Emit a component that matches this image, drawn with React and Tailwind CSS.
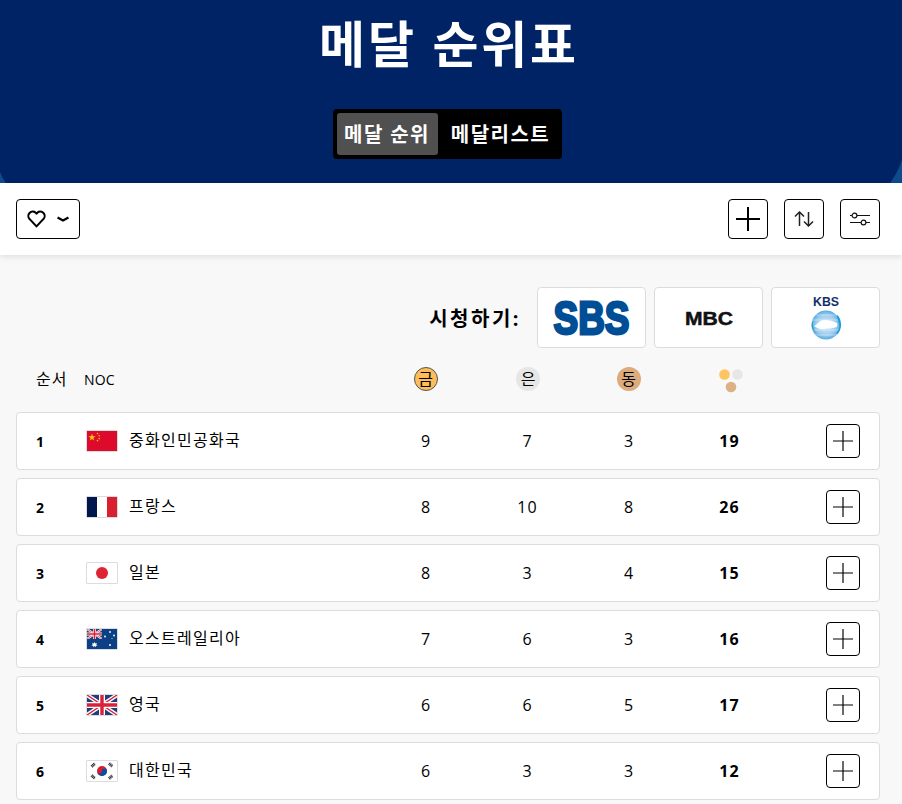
import React from "react";

const CJK = "font-['Open_Sans','Noto_Sans_CJK_KR',sans-serif]";

function Frame({ children }) {
  return (
    <span className="block w-8 h-[22px] shrink-0 border border-[#dcdcdc] rounded-[1px] overflow-hidden bg-white">
      <svg viewBox="0 0 30 20" width="30" height="20" preserveAspectRatio="none" className="block">{children}</svg>
    </span>
  );
}
const China = () => (
  <Frame>
    <rect width="30" height="20" fill="#de0a2b" />
    <polygon points="5,2.500 5.900,5.200 8.600,5.200 6.400,6.900 7.200,9.500 5,7.900 2.800,9.500 3.600,6.900 1.400,5.200 4.100,5.200" fill="#f5c518" />
    <circle cx="10.500" cy="2.500" r=".8" fill="#f5c518" /><circle cx="12.200" cy="4.800" r=".8" fill="#f5c518" />
    <circle cx="12.200" cy="7.600" r=".8" fill="#f5c518" /><circle cx="10.500" cy="9.600" r=".8" fill="#f5c518" />
  </Frame>
);
const France = () => (
  <Frame>
    <rect width="10" height="20" fill="#00174d" /><rect x="10" width="10" height="20" fill="#fff" /><rect x="20" width="10" height="20" fill="#d91f30" />
  </Frame>
);
const Japan = () => (
  <Frame><rect width="30" height="20" fill="#fff" /><circle cx="15" cy="10" r="6" fill="#de2432" /></Frame>
);
const Jack = () => (
  <>
    <rect width="30" height="20" fill="#1d3f7c" />
    <path d="M0 0L30 20M30 0L0 20" stroke="#fff" strokeWidth="4" />
    <path d="M0 0L30 20M30 0L0 20" stroke="#d9213a" strokeWidth="1.400" />
    <path d="M15 0V20M0 10H30" stroke="#fff" strokeWidth="6" />
    <path d="M15 0V20M0 10H30" stroke="#d9213a" strokeWidth="3.400" />
  </>
);
const Australia = () => (
  <Frame>
    <rect width="30" height="20" fill="#0b3f86" />
    <svg x="0" y="0" width="15" height="10" viewBox="0 0 30 20"><Jack /></svg>
    <path d="M7.500 13l.8 1.400 1.600-.3-.6 1.500 1.200 1-1.600.2-.4 1.500-1-1.200-1 1.200-.4-1.500-1.600-.2 1.200-1-.6-1.500 1.600.3z" fill="#fff" />
    <circle cx="23" cy="3" r=".9" fill="#fff" /><circle cx="18" cy="7.500" r=".9" fill="#fff" />
    <circle cx="27" cy="6.500" r=".9" fill="#fff" /><circle cx="23" cy="16" r="1" fill="#fff" /><circle cx="25" cy="9.500" r=".5" fill="#fff" />
  </Frame>
);
const UK = () => (<Frame><Jack /></Frame>);
const Korea = () => (
  <Frame>
    <rect width="30" height="20" fill="#fff" />
    <circle cx="15" cy="10" r="5" fill="#d3202f" />
    <path d="M10 10a5 5 0 0 0 10 0a2.500 2.500 0 0 0-5 0a2.500 2.500 0 0 1-5 0z" fill="#0b4ea2" />
    <g stroke="#2b2b2b" strokeWidth="3" strokeDasharray="1 .5">
      <path d="M4.500 5.500L8 2.500" /><path d="M22 2.500L25.500 5.500" /><path d="M4.500 14.500L8 17.500" /><path d="M22 17.500L25.500 14.500" />
    </g>
  </Frame>
);

const Plus = ({ s = 22, w = 1.500 }) => (
  <svg width={s} height={s} viewBox="0 0 24 24" fill="none" stroke="#000" strokeWidth={w}>
    <path d="M12 0V24M0 12H24" />
  </svg>
);

const rows = [
  [1, China, "중화인민공화국", 9, 7, 3, 19],
  [2, France, "프랑스", 8, 10, 8, 26],
  [3, Japan, "일본", 8, 3, 4, 15],
  [4, Australia, "오스트레일리아", 7, 6, 3, 16],
  [5, UK, "영국", 6, 6, 5, 17],
  [6, Korea, "대한민국", 6, 3, 3, 12],
];

const Medal = ({ bg, label, ring }) => (
  <span className={`flex items-center justify-center w-6 h-6 rounded-full text-[16px] leading-none text-black ${bg} ${ring}`}>{label}</span>
);

const LogoCard = ({ children }) => (
  <div className="flex items-center justify-center w-[109px] h-[61px] bg-white border border-[#dcdcdc] rounded-[4px]">{children}</div>
);

export default function App() {
  return (
    <div className={`w-[902px] h-[804px] overflow-hidden bg-[#f8f8f8] ${CJK} text-black`}>
      <header className="relative h-[183px] pr-[6px] bg-[#002366] flex flex-col items-center overflow-hidden">
        <h1 className="mt-[16px] ml-[2px] text-[50px] leading-[56px] font-bold text-white tracking-[2.800px]">메달 순위표</h1>
        <div className="mt-[37px] mr-[2px] flex items-center h-[50px] w-[229px] pl-[4px] bg-black rounded-[4px] text-white font-bold text-[20px]">
          <span className="flex items-center justify-center w-[101px] h-[42px] pt-[1px] rounded-[3px] bg-[#505050] tracking-[1.400px] whitespace-nowrap">메달 순위</span>
          <span className="flex items-center justify-center w-[124px] h-[42px] pt-[1px] pl-[2px] tracking-[1.500px] whitespace-nowrap">메달리스트</span>
        </div>
        <svg className="absolute left-0 bottom-0" width="6" height="11" viewBox="0 0 6 11"><path d="M0 0 Q2 6 6 11 H0Z" fill="#0f4a8c" /></svg>
        <svg className="absolute right-0 bottom-0" width="12" height="23" viewBox="0 0 12 23"><path d="M12 0 Q8 12 0 23 H12Z" fill="#0f4a8c" /></svg>
      </header>

      <div className="relative flex items-center justify-between h-[72px] pl-4 pr-[22px] pb-[1px] bg-white shadow-[0_2px_6px_rgba(0,0,0,0.1)]">
        <button className="flex items-center justify-center gap-[11px] w-16 h-10 border border-black rounded-[4px] bg-white pr-[1px]">
          <svg width="19" height="19" viewBox="0 0 24 24" fill="none" stroke="#000" strokeWidth="2.600" strokeLinejoin="round">
            <path d="M12 22 L3.400 12.800 A5.500 5.500 0 0 1 11 4.800 L12 5.900 L13 4.800 A5.500 5.500 0 0 1 20.600 12.800 Z" />
          </svg>
          <svg width="12" height="6" viewBox="0 0 12 6" fill="none" stroke="#000" strokeWidth="2.400"><path d="M.5 1.500 L6 4.500 L11.500 1.500" /></svg>
        </button>
        <div className="flex items-center gap-4">
          <button className="flex items-center justify-center w-10 h-10 border border-black rounded-[4px]"><Plus s={24} w={2} /></button>
          <button className="flex items-center justify-center w-10 h-10 border border-black rounded-[4px]">
            <svg width="20" height="16" viewBox="0 0 20 16" fill="none" stroke="#222" strokeWidth="1.500">
              <path d="M5.500 15V1M1 5.500L5.500 1L10 5.500" /><path d="M14.500 1V15M10 10.500L14.500 15L19 10.500" />
            </svg>
          </button>
          <button className="flex items-center justify-center w-10 h-10 border border-black rounded-[4px]">
            <svg width="20" height="14" viewBox="0 0 20 14" fill="none" stroke="#111" strokeWidth="1.200">
              <path d="M7 3.500H20M0 10.500H11M16 10.500H20M0 3.500H2" />
              <circle cx="4.500" cy="3.500" r="2.400" /><circle cx="13.500" cy="10.500" r="2.400" />
            </svg>
          </button>
        </div>
      </div>

      <main className="pl-4 pr-[22px] pt-[32px]">
        <div className="flex items-center justify-end gap-2">
          <span className="mr-[8px] text-[20px] font-bold leading-none tracking-[2.500px] pt-[3px]">시청하기:</span>
          <LogoCard>
            <svg width="107" height="59" viewBox="0 0 107 59" className="overflow-visible">
              <text x="53.500" y="46" textAnchor="middle" textLength="76" lengthAdjust="spacingAndGlyphs" fontFamily="Liberation Sans" fontWeight="700" fontSize="47" fill="#004f96" stroke="#004f96" strokeWidth="2.800">SBS</text>
            </svg>
          </LogoCard>
          <LogoCard>
            <svg width="100" height="30" viewBox="0 0 100 30">
              <text x="50" y="21.500" textAnchor="middle" textLength="48" lengthAdjust="spacingAndGlyphs" fontFamily="Liberation Sans" fontWeight="700" fontSize="19" fill="#111" stroke="#111" strokeWidth=".5">MBC</text>
            </svg>
          </LogoCard>
          <LogoCard>
            <svg width="60" height="46" viewBox="0 0 60 46">
              <defs>
                <radialGradient id="kbsGlobe" cx="0.500" cy="0.500" r="0.550">
                  <stop offset="0" stopColor="#d6ebf8" />
                  <stop offset="0.650" stopColor="#9bcdee" />
                  <stop offset="1" stopColor="#3f9edb" />
                </radialGradient>
              </defs>
              <text x="30" y="10.500" textAnchor="middle" textLength="26" lengthAdjust="spacingAndGlyphs" fontFamily="Liberation Sans" fontSize="13" fontWeight="700" fill="#13306b">KBS</text>
              <circle cx="30" cy="30" r="14.500" fill="url(#kbsGlobe)" />
              <path d="M19 20H41M16.500 25H43.500M16.500 35H43.500M19 40H41" stroke="#fff" strokeOpacity=".5" strokeWidth=".8" />
              <path d="M18 31c3-1 5-6 10-6s9 1 13 3c1 2 0 3-.5 4-5 2-8 1-12 2s-7-1-10.500-3z" fill="#fff" />
              <path d="M41 19.500a14.500 14.500 0 0 1 .5 19.500c-.5 0-1-.5-1-1 2.500-3.500 3.500-5.500 2.500-10-1-3-2-5-2-8.500zM17 26c-1 5 1 9 3 12-3-3-6-7-3-12z" fill="#1e9ad6" />
            </svg>
          </LogoCard>
        </div>

        <div className="grid grid-cols-[68px_291px_101px_102px_101px_101px_1fr] items-center h-[32px] mt-[15px] text-center">
          <span className="pl-[20px] text-left whitespace-nowrap text-[16px] tracking-[1px]">순서</span>
          <span className="text-left text-[14px] tracking-[0.2px]">NOC</span>
          <span className="flex justify-center"><Medal bg="bg-[#fdbd5a]" ring="border border-[#555]" label="금" /></span>
          <span className="flex justify-center pl-[2px]"><Medal bg="bg-[#e6e6e6]" ring="" label="은" /></span>
          <span className="flex justify-center"><Medal bg="bg-[#dcac7c]" ring="" label="동" /></span>
          <span className="flex justify-center pt-[3px] pl-[2px]">
            <svg width="24" height="24" viewBox="0 0 24 24">
              <circle cx="5.500" cy="5.500" r="5.300" fill="#fdc45f" /><circle cx="18.500" cy="5.500" r="5.300" fill="#e6e6e6" /><circle cx="12" cy="18" r="5.300" fill="#dcb183" />
            </svg>
          </span>
          <span />
        </div>

        <div className="mt-[17px] flex flex-col gap-2">
          {rows.map(([rank, Flag, name, g, s, b, t]) => (
            <div key={rank} className="grid grid-cols-[68px_291px_101px_102px_101px_101px_1fr] items-center h-[58px] bg-white border border-[#dcdcdc] rounded-[4px] text-[16px] text-center">
              <span className="pl-[19px] text-left text-[14px] font-bold">{rank}</span>
              <span className="flex items-center gap-[11px] pl-[1px] text-left">
                <Flag />
                <span className="whitespace-nowrap tracking-[1.300px] -translate-y-px">{name}</span>
              </span>
              <span className="pr-[2px]">{g}</span>
              <span className="pr-[1px] tracking-[1px]">{s}</span>
              <span className="pr-[2px]">{b}</span>
              <span className="pr-[2px] font-bold tracking-[1.200px]">{t}</span>
              <span className="flex justify-end pr-[19px]">
                <button className="flex items-center justify-center w-[34px] h-[34px] border border-black rounded-[4px]"><Plus s={20} w={1.400} /></button>
              </span>
            </div>
          ))}
        </div>
      </main>
    </div>
  );
}
